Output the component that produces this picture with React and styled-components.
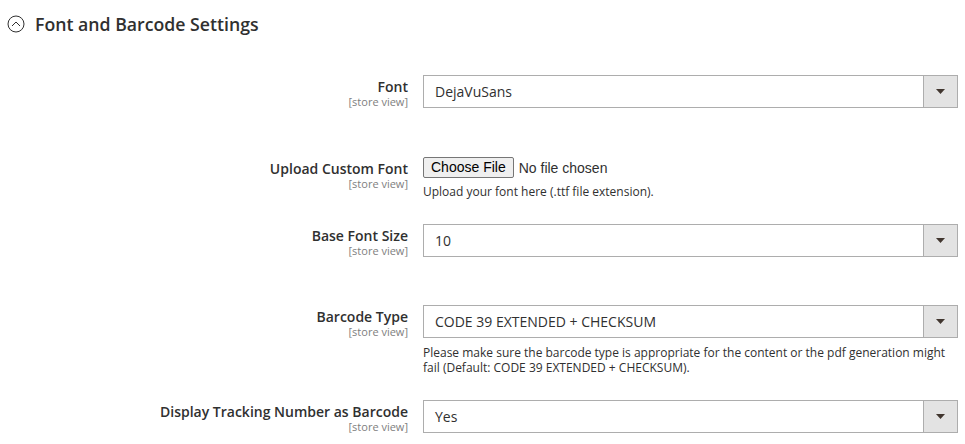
import React from "react";
import styled, { createGlobalStyle } from "styled-components";

const Global = createGlobalStyle`
  html, body { margin: 0; padding: 0; background: #ffffff; }
  body { font-family: "Open Sans", "Noto Sans", sans-serif; color: #303030; }
`;

const Page = styled.div`
  width: 965px;
  height: 444px;
  overflow: hidden;
  background: #fff;
`;

const Header = styled.div`
  display: flex;
  align-items: center;
  gap: 10px;
  padding: 11px 0 0 7px;
`;

const Title = styled.h2`
  margin: 0;
  font-size: 17.7px;
  line-height: 26px;
  font-weight: 600;
  color: #303030;
`;

const Fieldset = styled.div`
  margin-top: 38px;
  display: flex;
  flex-direction: column;
`;

const Field = styled.div`
  display: grid;
  grid-template-columns: 408px 535px;
  column-gap: 15px;
  margin-bottom: ${(p) => p.$gap}px;
`;

const Label = styled.div`
  text-align: right;
  padding-top: 3px;
`;

const LabelText = styled.div`
  font-size: 14px;
  line-height: 17px;
  font-weight: 600;
  color: #303030;
`;

const Scope = styled.div`
  font-size: 11px;
  line-height: 13px;
  color: #808080;
`;

const Control = styled.div`
  display: flex;
  flex-direction: column;
`;

const SelectBox = styled.div`
  box-sizing: border-box;
  height: 33px;
  border: 1px solid #adadad;
  display: flex;
  background: #fff;
`;

const SelectValue = styled.div`
  flex: 1;
  padding: 0 11px;
  font-size: 14px;
  line-height: 31px;
  color: #303030;
`;

const SelectArrow = styled.div`
  width: 33px;
  border-left: 1px solid #adadad;
  background: #e3e3e3;
  display: flex;
  align-items: center;
  justify-content: center;
`;

const FileRow = styled.div`
  display: flex;
  align-items: center;
  gap: 5px;
  height: 21px;
`;

const FileButton = styled.button`
  box-sizing: border-box;
  height: 21px;
  padding: 0 7px;
  border: 1px solid #767676;
  border-radius: 2px;
  background: #efefef;
  font-family: "Liberation Sans", Arial, sans-serif;
  font-size: 14px;
  line-height: 19px;
  color: #000;
`;

const FileStatus = styled.span`
  font-family: "Liberation Sans", Arial, sans-serif;
  font-size: 14px;
  color: #303030;
`;

const Note = styled.div`
  margin-top: ${(p) => p.$top}px;
  font-size: 12px;
  line-height: 15px;
  color: #303030;
`;

const Arrow = () => (
  <svg width="9" height="5" viewBox="0 0 9 5">
    <path d="M0 0 H9 L4.5 5 Z" fill="#41362f" />
  </svg>
);

const CollapseIcon = () => (
  <svg width="18" height="18" viewBox="0 0 18 18">
    <circle cx="9" cy="9" r="8" fill="none" stroke="#303030" strokeWidth="1" />
    <path d="M5 11 L9 7 L13 11" fill="none" stroke="#303030" strokeWidth="1" />
  </svg>
);

const Select = ({ value }) => (
  <SelectBox>
    <SelectValue>{value}</SelectValue>
    <SelectArrow>
      <Arrow />
    </SelectArrow>
  </SelectBox>
);

const FieldLabel = ({ children }) => (
  <Label>
    <LabelText>{children}</LabelText>
    <Scope>[store view]</Scope>
  </Label>
);

export default function App() {
  return (
    <Page>
      <Global />
      <Header>
        <CollapseIcon />
        <Title>Font and Barcode Settings</Title>
      </Header>
      <Fieldset>
        <Field $gap={49}>
          <FieldLabel>Font</FieldLabel>
          <Control>
            <Select value="DejaVuSans" />
          </Control>
        </Field>
        <Field $gap={25}>
          <FieldLabel>Upload Custom Font</FieldLabel>
          <Control>
            <FileRow>
              <FileButton>Choose File</FileButton>
              <FileStatus>No file chosen</FileStatus>
            </FileRow>
            <Note $top={6}>Upload your font here (.ttf file extension).</Note>
          </Control>
        </Field>
        <Field $gap={48}>
          <FieldLabel>Base Font Size</FieldLabel>
          <Control>
            <Select value="10" />
          </Control>
        </Field>
        <Field $gap={25}>
          <FieldLabel>Barcode Type</FieldLabel>
          <Control>
            <Select value="CODE 39 EXTENDED + CHECKSUM" />
            <Note $top={7}>
              Please make sure the barcode type is appropriate for the content or the pdf generation might
              fail (Default: CODE 39 EXTENDED + CHECKSUM).
            </Note>
          </Control>
        </Field>
        <Field $gap={0}>
          <FieldLabel>Display Tracking Number as Barcode</FieldLabel>
          <Control>
            <Select value="Yes" />
          </Control>
        </Field>
      </Fieldset>
    </Page>
  );
}
